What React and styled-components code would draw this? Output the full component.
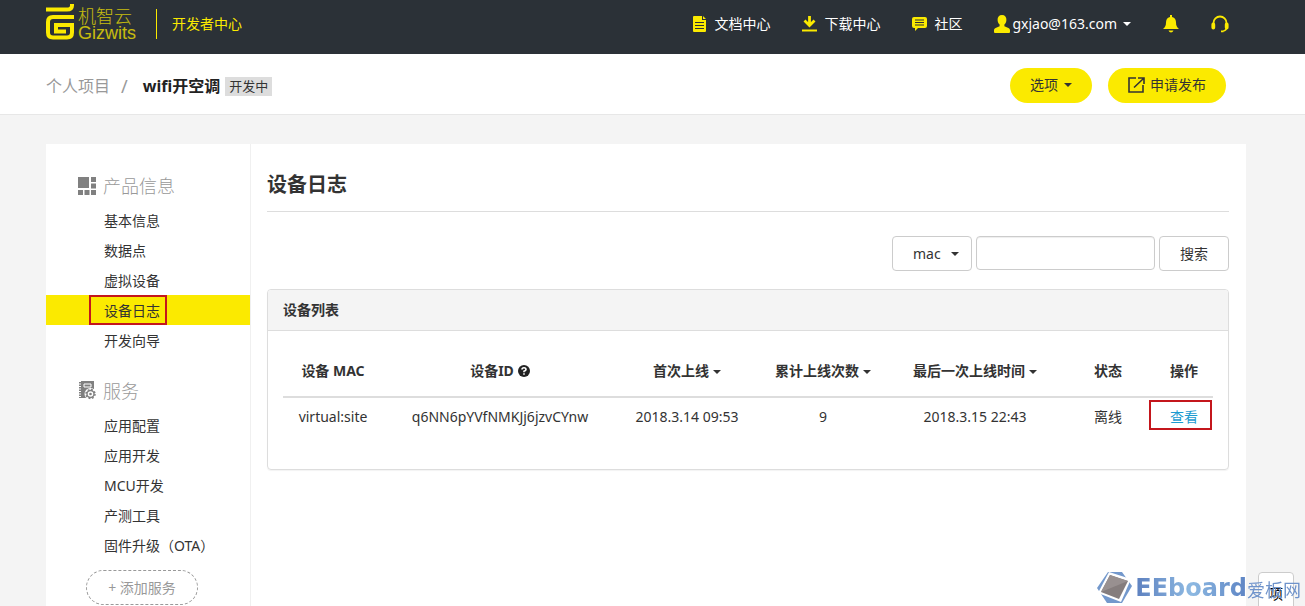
import React from 'react';
import styled, { createGlobalStyle, css } from 'styled-components';

const fonts = '"Noto Sans", "Noto Sans CJK SC", sans-serif';
const yellow = '#fbea00';
const ink = '#333';

const GlobalStyle = createGlobalStyle`
  *, *::before, *::after { box-sizing: border-box; }
  body {
    margin: 0;
    background: #f4f4f4;
    color: ${ink};
    font: 14px/20px ${fonts};
  }
  a { color: inherit; text-decoration: none; }
  button, input, select { font: inherit; color: inherit; }
`;

const Page = styled.div`
  display: flex;
  flex-direction: column;
  min-height: 100vh;
`;

const Header = styled.header`
  display: flex;
  justify-content: space-between;
  height: 54px;
  padding: 0 76px 0 46px;
  background: #2b3137;
`;

const Brand = styled.div`
  display: flex;
  align-items: flex-start;
  padding-top: 4px;
`;

const LogoLink = styled.a`
  display: flex;
  gap: 3px;
  color: ${yellow};
`;

const LogoText = styled.span`
  display: flex;
  flex-direction: column;
  padding-top: 3px;
  font-weight: 300;
  font-size: 18px;
  line-height: 18px;
  opacity: 0.75;
`;

const LogoLatin = styled.span`
  font-family: "Liberation Sans", sans-serif;
  line-height: 16px;
`;

const BrandTitle = styled.a`
  margin: 5px 0 0 20px;
  padding: 5px 0 5px 15px;
  border-left: 1px solid ${yellow};
  color: ${yellow};
`;

const Nav = styled.nav`
  display: flex;
  align-items: center;
  gap: 32px;
  height: 47px;
`;

const NavLink = styled.a`
  display: flex;
  align-items: center;
  gap: ${(p) => (p.$tight ? '2px' : '7px')};
  color: #fff;
  white-space: nowrap;

  svg { color: ${yellow}; flex: none; }
`;

const Caret = styled.span`
  display: inline-block;
  width: 0;
  height: 0;
  margin-left: 4px;
  vertical-align: middle;
  border: 4px solid transparent;
  border-top-color: currentColor;
  border-bottom: 0;
`;

const TitleBar = styled.div`
  display: flex;
  justify-content: space-between;
  align-items: center;
  height: 61px;
  padding: 0 79px 0 46px;
  background: #fff;
  border-bottom: 1px solid #e7e7e7;
`;

const Crumbs = styled.div`
  display: flex;
  align-items: center;
  padding-top: 4px;
  font-size: 16px;
  color: #999;
`;

const Slash = styled.span`
  margin: 0 15px 0 11px;
  font-size: 18px;
`;

const Project = styled.h1`
  margin: 0;
  font-size: 16px;
  line-height: 20px;
  color: #222;
`;

const Tag = styled.span`
  margin-left: 5px;
  padding: 0 4px;
  background: #ddd;
  color: ${ink};
  font-size: 13px;
  line-height: 19px;
`;

const Actions = styled.div`
  display: flex;
  gap: 16px;
  padding-top: 2px;
`;

const PillButton = styled.button`
  display: flex;
  align-items: center;
  gap: 2px;
  height: 35px;
  padding: 0 20px;
  border: 0;
  border-radius: 18px;
  background: ${yellow};

  svg { margin-right: 3px; }
`;

const Card = styled.div`
  display: flex;
  flex: 1;
  margin: 29px 59px 0 46px;
  background: #fff;
`;

const Sidebar = styled.aside`
  flex: none;
  width: 205px;
  padding-top: 22px;
  border-right: 1px solid #f0f0f0;
`;

const Group = styled.section`
  & + & { margin-top: 16px; }
`;

const GroupTitle = styled.h2`
  display: flex;
  align-items: center;
  gap: 7px;
  height: 39px;
  margin: 0;
  padding-left: 32px;
  color: #999;
  font-size: 18px;
  font-weight: 300;
`;

const Menu = styled.ul`
  margin: 0;
  padding: 0;
  list-style: none;
`;

const marked = css`
  &::after {
    content: '';
    position: absolute;
    border: 2px solid #c4161c;
  }
`;

const MenuLink = styled.a`
  position: relative;
  display: block;
  padding: 2px 0 0 58px;
  line-height: 28px;
  white-space: nowrap;
  ${(p) => p.$active && css`
    background: ${yellow};
    ${marked}
    &::after { inset: 0 83px 0 43px; }
  `}
`;

const AddService = styled.button`
  display: block;
  width: 112px;
  height: 35px;
  margin: 10px 0 0 40px;
  border: 1px dashed #999;
  border-radius: 18px;
  background: none;
  color: #999;
`;

const Main = styled.main`
  flex: 1;
  min-width: 0;
  padding: 12px 17px 0 16px;
`;

const Heading = styled.h2`
  margin: 0 0 24px;
  padding-top: 2px;
  border-bottom: 1px solid #ddd;
  font-size: 20px;
  line-height: 53px;
`;

const SearchForm = styled.form`
  display: flex;
  justify-content: flex-end;
  gap: 4px;
  margin-bottom: 18px;
`;

const field = css`
  height: 35px;
  border: 1px solid #ccc;
  border-radius: 4px;
  background: #fff;
`;

const SelectWrap = styled.label`
  display: grid;
  align-items: center;
  width: 80px;

  & > * { grid-area: 1 / 1; }
  ${Caret} { justify-self: end; margin-right: 13px; pointer-events: none; }
`;

const FieldSelect = styled.select`
  ${field}
  width: 100%;
  padding: 0 20px;
  appearance: none;
`;

const TextField = styled.input`
  ${field}
  width: 179px;
  height: 34px;
  padding: 0 12px;
  box-shadow: inset 0 1px 1px rgba(0, 0, 0, 0.07);
`;

const SearchButton = styled.button`
  ${field}
  width: 70px;
  padding: 0;
`;

const Panel = styled.section`
  border: 1px solid #ddd;
  border-radius: 4px;
  box-shadow: 0 1px 1px rgba(0, 0, 0, 0.05);
`;

const PanelTitle = styled.h3`
  margin: 0;
  padding: 10px 15px;
  border-bottom: 1px solid #ddd;
  border-radius: 3px 3px 0 0;
  background: #f4f4f4;
  font-size: 14px;
  line-height: 20px;
`;

const PanelBody = styled.div`
  padding: 15px 15px 34px;
`;

const Table = styled.table`
  width: 100%;
  table-layout: fixed;
  border-collapse: collapse;
  text-align: center;
  white-space: nowrap;

  th { height: 51px; padding: 0; border-bottom: 2px solid #ddd; }
  td { height: 38px; padding: 0; }
  th svg { margin-left: 4px; vertical-align: -1px; }
`;

const ViewLink = styled.a`
  position: relative;
  color: #1b9bd0;
  ${marked}
  &::after { inset: -7px -14px -4px -21px; }
`;

const Watermark = styled.div`
  position: fixed;
  right: 4px;
  bottom: 2px;
  z-index: 2;
  display: flex;
  align-items: center;
  color: #6f93cb;
  pointer-events: none;
`;

const WatermarkName = styled.span`
  margin-left: 3px;
  font: bold 24px/32px "DejaVu Sans", sans-serif;
  background: linear-gradient(90deg, #5d80bf, #8db9e2 50%, #5d84c4);
  background-clip: text;
  color: transparent;
`;

const WatermarkSite = styled.span`
  margin-top: 5px;
  font-size: 18px;
`;

const BackTop = styled.button`
  position: fixed;
  right: 11px;
  bottom: -1px;
  z-index: 1;
  width: 36px;
  height: 35px;
  padding: 8px 0 0;
  border: 1px solid #ccc;
  border-radius: 4px 4px 0 0;
  background: #fff;
  color: #000;
`;

const LogoMark = () => (
  <svg width="29" height="36" viewBox="0 0 29 36" fill="none" stroke="currentColor">
    <path d="M0 5.500h21q5 0 5-4V0" strokeWidth="4" />
    <path d="M28 13H7q-5 0-5 5v10.500q0 5 5 5h14q5 0 5-5V21H10v6.500h10" strokeWidth="4" />
  </svg>
);

const DocIcon = () => (
  <svg width="14" height="16" viewBox="0 0 14 16" fill="currentColor">
    <path d="M1 0h8v4h4v11a1 1 0 0 1-1 1H1a1 1 0 0 1-1-1V1a1 1 0 0 1 1-1zm9 0 3 3h-3z" />
    <path d="M2 6.5h9M2 9.5h9M2 12.5h9" stroke="#2b3137" />
  </svg>
);

const DownloadIcon = () => (
  <svg width="15" height="16" viewBox="0 0 15 16" fill="none" stroke="currentColor" strokeWidth="2.800">
    <path d="M7.500 0v9M2.500 4.500l5 5 5-5" />
    <path d="M0 14.500h15" strokeWidth="2" />
  </svg>
);

const ChatIcon = () => (
  <svg width="15" height="14" viewBox="0 0 15 14" fill="currentColor">
    <path d="M2 0h11a2 2 0 0 1 2 2v7a2 2 0 0 1-2 2H6l-3 3v-3H2a2 2 0 0 1-2-2V2a2 2 0 0 1 2-2z" />
    <path d="M3 3h9M3 5.5h9M3 8h9" stroke="#2b3137" />
  </svg>
);

const UserIcon = () => (
  <svg width="16" height="18" viewBox="0 0 16 18" fill="currentColor">
    <path d="M8 0c3 0 4.600 2 4.400 5-.1 2-.9 3.500-2 4.600v1.600l4 1.700c1.200.6 1.600 1.400 1.600 2.600V17a1 1 0 0 1-1 1H1a1 1 0 0 1-1-1v-1.500c0-1.200.4-2 1.600-2.600l4-1.700V9.600c-1.100-1.100-1.900-2.600-2-4.600C3.400 2 5 0 8 0z" />
  </svg>
);

const BellIcon = () => (
  <svg width="16" height="18" viewBox="0 0 16 18" fill="currentColor">
    <path d="M7 0h2v2c3 .6 4 3 4 5.500 0 3.500 1 4.500 3 6.500H0c2-2 3-3 3-6.500C3 5 4 2.600 7 2zM5.500 15.500h5q-.8 2-2.500 2t-2.500-2z" />
  </svg>
);

const HeadsetIcon = () => (
  <svg width="18" height="18" viewBox="0 0 18 18" fill="none" stroke="currentColor" strokeWidth="1.800">
    <path d="M2.500 9V8a6.500 6.500 0 0 1 13 0v1" />
    <path d="M2.300 9.500v3M15.700 9.500v3" strokeWidth="3.800" strokeLinecap="round" />
    <path d="M15.500 14q-1.500 1.600-3 2M12.500 16.300h-2.500" />
  </svg>
);

const ShareIcon = () => (
  <svg width="17" height="16" viewBox="0 0 17 16" fill="none" stroke="currentColor" strokeWidth="1.600">
    <path d="M8 1H1v14h14V8M6 10.500 15.500 1.500M10 1h6v6" />
  </svg>
);

const GridIcon = () => (
  <svg width="18" height="18" viewBox="0 0 18 18" fill="#808080">
    <path d="M0 0h11v11H0zM13 0h5v5h-5zM13 6.500h5v5h-5zM0 13h5v5H0zM6.500 13h5v5h-5zM13 13h5v5h-5z" />
  </svg>
);

const ServiceIcon = () => (
  <svg width="18" height="19" viewBox="0 0 18 19">
    <path d="M3 0h13v17H3z" fill="#808080" />
    <path d="M2 1v16" stroke="#808080" strokeWidth="2" strokeDasharray="1.500 1" />
    <path d="M6 3h7v3H6z" fill="none" stroke="#fff" />
    <circle cx="12.500" cy="13" r="6" fill="#fff" />
    <circle cx="12.500" cy="13" r="4.500" fill="none" stroke="#808080" strokeWidth="1.500" strokeDasharray="1.770 1.770" />
    <circle cx="12.500" cy="13" r="3.500" fill="none" stroke="#808080" strokeWidth="1.400" />
    <circle cx="12.500" cy="13" r="1.300" fill="#808080" />
  </svg>
);

const HelpIcon = () => (
  <svg width="12" height="12" viewBox="0 0 12 12" fill="none">
    <circle cx="6" cy="6" r="6" fill="#222" />
    <path d="M4 4.600Q4 2.700 6 2.700t2 1.700Q8 5.500 6 6.200v1" stroke="#fff" strokeWidth="1.600" />
    <path d="M6 8.200v1.600" stroke="#fff" strokeWidth="1.600" />
  </svg>
);

const ChipIcon = () => (
  <svg width="35" height="33" viewBox="0 0 35 33">
    <path d="M11 1h14l10 14-10 17H10L0 17z" fill="#7398cc" />
    <path d="M12 1 34 8 24 31 1 22z" fill="#fff" />
    <path d="M13 4 31 10 22 28 4 21z" fill="#857d7d" />
    <path d="M13 4 31 10 4 21z" fill="#989090" />
  </svg>
);

const productMenu = ['基本信息', '数据点', '虚拟设备', '设备日志', '开发向导'];
const serviceMenu = ['应用配置', '应用开发', 'MCU开发', '产测工具', '固件升级（OTA）'];

const columns = [
  { label: '设备 MAC', width: 100 },
  { label: '设备ID', width: 234, help: true },
  { label: '首次上线', width: 140, sort: true },
  { label: '累计上线次数', width: 132, sort: true },
  { label: '最后一次上线时间', width: 172, sort: true },
  { label: '状态', width: 94 },
  { label: '操作', width: 58 },
];

const devices = [
  ['virtual:site', 'q6NN6pYVfNMKJj6jzvCYnw', '2018.3.14 09:53', '9', '2018.3.15 22:43', '离线'],
];

const MenuGroup = ({ icon, title, items, active }) => (
  <Group>
    <GroupTitle>{icon}{title}</GroupTitle>
    <Menu>
      {items.map((item) => (
        <li key={item}><MenuLink href="#" $active={item === active}>{item}</MenuLink></li>
      ))}
    </Menu>
  </Group>
);

export default function App() {
  return (
    <Page>
      <GlobalStyle />
      <Header>
        <Brand>
          <LogoLink href="#">
            <LogoMark />
            <LogoText>机智云<LogoLatin>Gizwits</LogoLatin></LogoText>
          </LogoLink>
          <BrandTitle href="#">开发者中心</BrandTitle>
        </Brand>
        <Nav>
          <NavLink href="#"><DocIcon />文档中心</NavLink>
          <NavLink href="#"><DownloadIcon />下载中心</NavLink>
          <NavLink href="#"><ChatIcon />社区</NavLink>
          <NavLink href="#" $tight><UserIcon />gxjao@163.com<Caret /></NavLink>
          <NavLink href="#" aria-label="通知"><BellIcon /></NavLink>
          <NavLink href="#" aria-label="客服"><HeadsetIcon /></NavLink>
        </Nav>
      </Header>

      <TitleBar>
        <Crumbs>
          <a href="#">个人项目</a>
          <Slash>/</Slash>
          <Project>wifi开空调</Project>
          <Tag>开发中</Tag>
        </Crumbs>
        <Actions>
          <PillButton type="button">选项<Caret /></PillButton>
          <PillButton type="button"><ShareIcon />申请发布</PillButton>
        </Actions>
      </TitleBar>

      <Card>
        <Sidebar>
          <MenuGroup icon={<GridIcon />} title="产品信息" items={productMenu} active="设备日志" />
          <MenuGroup icon={<ServiceIcon />} title="服务" items={serviceMenu} />
          <AddService type="button">+ 添加服务</AddService>
        </Sidebar>
        <Main>
          <Heading>设备日志</Heading>
          <SearchForm>
            <SelectWrap>
              <FieldSelect aria-label="搜索字段" defaultValue="mac">
                <option value="mac">mac</option>
              </FieldSelect>
              <Caret />
            </SelectWrap>
            <TextField type="text" aria-label="搜索内容" />
            <SearchButton type="submit">搜索</SearchButton>
          </SearchForm>
          <Panel>
            <PanelTitle>设备列表</PanelTitle>
            <PanelBody>
              <Table>
                <colgroup>
                  {columns.map((c) => <col key={c.label} width={c.width} />)}
                </colgroup>
                <thead>
                  <tr>
                    {columns.map((c) => (
                      <th key={c.label} scope="col">
                        {c.label}{c.help && <HelpIcon />}{c.sort && <Caret />}
                      </th>
                    ))}
                  </tr>
                </thead>
                <tbody>
                  {devices.map((row) => (
                    <tr key={row[1]}>
                      {row.map((cell) => <td key={cell}>{cell}</td>)}
                      <td><ViewLink href="#">查看</ViewLink></td>
                    </tr>
                  ))}
                </tbody>
              </Table>
            </PanelBody>
          </Panel>
        </Main>
      </Card>

      <BackTop type="button">项</BackTop>
      <Watermark>
        <ChipIcon />
        <WatermarkName>EEboard</WatermarkName>
        <WatermarkSite>爱板网</WatermarkSite>
      </Watermark>
    </Page>
  );
}
